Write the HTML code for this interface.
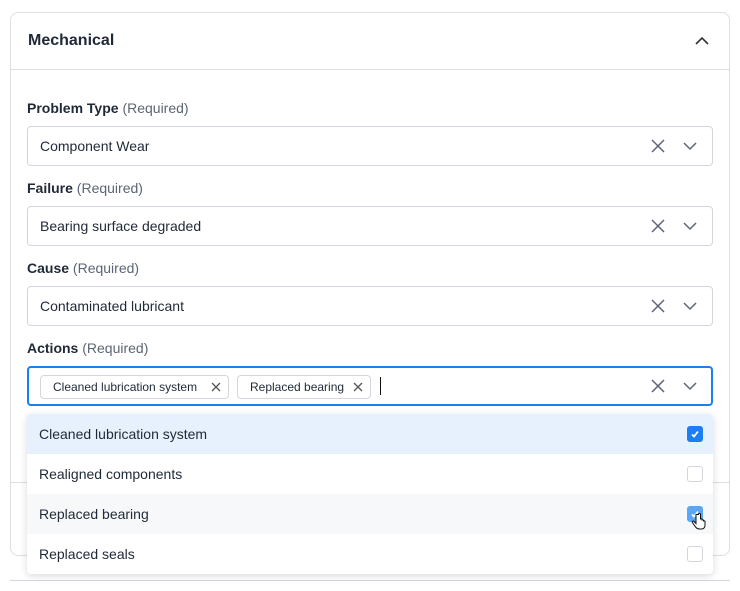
<!DOCTYPE html>
<html><head><style>
*{box-sizing:border-box;margin:0;padding:0}
body{width:740px;height:591px;background:#fff;font-family:"Liberation Sans",sans-serif;color:#1f2937;position:relative;overflow:hidden}
.card{position:absolute;left:10px;top:12px;width:720px;height:544px;border:1px solid #dcdfe4;border-radius:8px}
.hdr{height:57px;border-bottom:1px solid #dcdfe4;display:flex;align-items:center;padding:0 17px;font-size:16px;color:#1f2937;font-weight:bold}
.lbl{position:absolute;left:27px;font-size:14px;font-weight:bold;color:#1f2937}
.lbl span{font-weight:normal;color:#5b6574}
.inp{position:absolute;left:27px;width:686px;height:40px;border:1px solid #d3d7dd;border-radius:4px;font-size:14px;padding-left:12px;display:flex;align-items:center}
.chip{position:absolute;top:7px;height:24px;border:1px solid #d3d7dd;border-radius:4px;font-size:12px;display:flex;align-items:center;padding-left:12px}
.dd{position:absolute;left:27px;top:414px;width:686px;height:160px;background:#fff;border-radius:4px;box-shadow:0 2px 8px rgba(0,0,0,.15);overflow:hidden}
.row{height:40px;display:flex;align-items:center;padding-left:12px;font-size:14px;position:relative}
.cb{position:absolute;left:660px;top:12px;width:16px;height:16px;border:1px solid #d3d7dd;border-radius:3px;background:#fff}
.cb.on{background:#1a7ff0;border-color:#1a7ff0}
</style></head><body>
<div class="card"><div class="hdr">Mechanical</div>
<svg style="position:absolute;left:683px;top:22px" width="16" height="12"><path d="M2 9L8 3L14 9" fill="none" stroke="#333" stroke-width="1.6"/></svg>
<div style="position:absolute;left:0;top:469px;width:718px;border-top:1px solid #dcdfe4"></div>
</div>
<div style="position:absolute;left:10px;top:580px;width:720px;border-top:1px solid #d3d7dd"></div>

<div class="lbl" style="top:100px">Problem Type <span>(Required)</span></div>
<div class="inp" style="top:126px">Component Wear</div>
<div class="lbl" style="top:180px">Failure <span>(Required)</span></div>
<div class="inp" style="top:206px">Bearing surface degraded</div>
<div class="lbl" style="top:260px">Cause <span>(Required)</span></div>
<div class="inp" style="top:286px">Contaminated lubricant</div>
<div class="lbl" style="top:340px">Actions <span>(Required)</span></div>
<div class="inp" style="top:366px;border:2px solid #1a7ff0">
<div class="chip" style="left:11px;width:189px">Cleaned lubrication system<svg style="position:absolute;right:6px" width="12" height="12"><path d="M2 2L10 10M10 2L2 10" stroke="#555" stroke-width="1.3"/></svg></div>
<div class="chip" style="left:208px;width:134px">Replaced bearing<svg style="position:absolute;right:6px" width="12" height="12"><path d="M2 2L10 10M10 2L2 10" stroke="#555" stroke-width="1.3"/></svg></div>
<div style="position:absolute;left:351px;top:9px;width:1px;height:18px;background:#111"></div>
</div>
<svg style="position:absolute;left:0;top:0" width="740" height="591">
<g stroke="#5b6574" stroke-width="1.5" fill="none">
<path d="M652 140L664 152M664 140L652 152"/><path d="M684 143L690 149L696 143"/>
<path d="M652 220L664 232M664 220L652 232"/><path d="M684 223L690 229L696 223"/>
<path d="M652 300L664 312M664 300L652 312"/><path d="M684 303L690 309L696 303"/>
<path d="M652 380L664 392M664 380L652 392"/><path d="M684 383L690 389L696 383"/>
</g></svg>
<div class="dd">
<div class="row" style="background:#e6f1fd">Cleaned lubrication system<div class="cb on"><svg width="14" height="14"><path d="M4 7.5L6 9.5L10 4.5" stroke="#fff" stroke-width="1.8" fill="none"/></svg></div></div>
<div class="row">Realigned components<div class="cb"></div></div>
<div class="row" style="background:#f7f8fa">Replaced bearing<div class="cb on" style="background:#5aa7f5;border-color:#5aa7f5"><svg width="14" height="14"><path d="M4 7.5L6 9.5L10 4.5" stroke="#fff" stroke-width="1.8" fill="none"/></svg></div>
<svg style="position:absolute;left:664px;top:19px" width="16" height="18"><path d="M5 1.5v9l-2-2c-1-1-2.5 0-1.5 1.2l3.5 4.8c1 1 2 1.5 3.5 1.5h2c2 0 3.5-1.5 3.5-3.5v-4c0-1-1.5-1-1.5 0v-1c0-1-1.5-1-1.5 0v-1c0-1-1.5-1-1.5 0v-5c0-1.5-2-1.5-2 0z" fill="#fff" stroke="#111" stroke-width="1"/></svg></div>
<div class="row">Replaced seals<div class="cb"></div></div>
</div>
</body></html>
